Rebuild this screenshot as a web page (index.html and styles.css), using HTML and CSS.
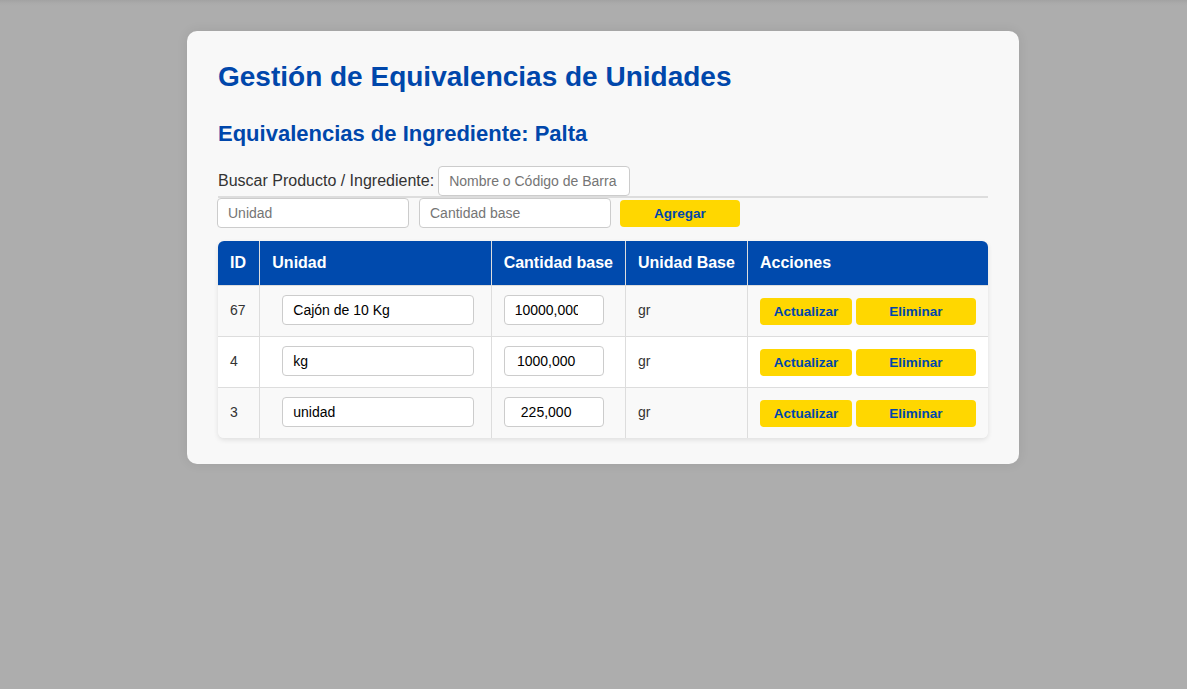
FILE: index.html
```html
<!DOCTYPE html>
<html lang="es">
<head>
<meta charset="utf-8">
<title>Gestión de Equivalencias de Unidades</title>
<link rel="stylesheet" href="styles.css">
</head>
<body>
<div class="overlay">
  <section class="modal">
    <h1 class="modal-title">Gestión de Equivalencias de Unidades</h1>
    <h2 class="modal-subtitle">Equivalencias de Ingrediente: Palta</h2>

    <div class="search-row">
      <label class="search-label" for="buscar">Buscar Producto / Ingrediente:</label>
      <input id="buscar" class="field" type="text" placeholder="Nombre o Código de Barra">
    </div>

    <div class="add-row">
      <input class="field" type="text" placeholder="Unidad">
      <input class="field" type="text" placeholder="Cantidad base">
      <button class="btn btn-add" type="button">Agregar</button>
    </div>

    <table class="eq-table">
      <thead>
        <tr>
          <th class="col-id">ID</th>
          <th class="col-unit">Unidad</th>
          <th class="col-qty">Cantidad base</th>
          <th class="col-base">Unidad Base</th>
          <th class="col-actions">Acciones</th>
        </tr>
      </thead>
      <tbody>
        <tr>
          <td>67</td>
          <td class="cell-unit"><input class="field cell-field" type="text" value="Cajón de 10 Kg"></td>
          <td class="cell-qty"><input class="field qty-field" type="text" value="10000,000"></td>
          <td>gr</td>
          <td class="cell-actions"><button class="btn btn-update" type="button">Actualizar</button><button class="btn btn-delete" type="button">Eliminar</button></td>
        </tr>
        <tr>
          <td>4</td>
          <td class="cell-unit"><input class="field cell-field" type="text" value="kg"></td>
          <td class="cell-qty"><input class="field qty-field" type="text" value="1000,000"></td>
          <td>gr</td>
          <td class="cell-actions"><button class="btn btn-update" type="button">Actualizar</button><button class="btn btn-delete" type="button">Eliminar</button></td>
        </tr>
        <tr>
          <td>3</td>
          <td class="cell-unit"><input class="field cell-field" type="text" value="unidad"></td>
          <td class="cell-qty"><input class="field qty-field" type="text" value="225,000"></td>
          <td>gr</td>
          <td class="cell-actions"><button class="btn btn-update" type="button">Actualizar</button><button class="btn btn-delete" type="button">Eliminar</button></td>
        </tr>
      </tbody>
    </table>
  </section>
</div>
</body>
</html>
```

FILE: styles.css
```css
* {
  box-sizing: border-box;
}

html,
body {
  margin: 0;
  height: 100%;
  overflow: hidden;
}

body {
  font-family: "Liberation Sans", Arial, sans-serif;
  color: #333;
  background: #adadad;
}

.overlay {
  height: 100%;
  padding: 31px 0 0 19px;
  background: linear-gradient(to bottom, #a2a2a2 0, #aaaaaa 3px, #adadad 6px);
}

.modal {
  width: 832px;
  margin: 0 auto;
  padding: 30px 31px 26px;
  background: #f8f8f8;
  border-radius: 10px;
  box-shadow: 0 0 12px rgba(0, 0, 0, 0.08);
}

.modal-title {
  margin: 0;
  font-size: 28px;
  line-height: 32px;
  font-weight: bold;
  color: #0047ab;
}

.modal-subtitle {
  margin: 28px 0 0;
  font-size: 22px;
  line-height: 26px;
  font-weight: bold;
  color: #0047ab;
}

.search-row {
  display: flex;
  align-items: center;
  gap: 4px;
  margin-top: 19px;
  border-bottom: 2px solid #dddddd;
}

.search-label {
  font-size: 16px;
  color: #333;
}

.field {
  width: 192px;
  height: 30px;
  padding: 0 10px;
  border: 1px solid #cccccc;
  border-radius: 4px;
  background: #ffffff;
  font-family: "Liberation Sans", Arial, sans-serif;
  font-size: 14px;
  color: #000;
}

.field::placeholder {
  color: #757575;
}

.add-row {
  display: flex;
  align-items: center;
  gap: 10px;
  margin-left: -1px;
}

.btn {
  height: 27px;
  padding: 0;
  border: none;
  border-radius: 4px;
  background: #ffd700;
  color: #0047ab;
  font-family: "Liberation Sans", Arial, sans-serif;
  font-size: 13.5px;
  font-weight: bold;
  cursor: pointer;
}

.btn-add {
  width: 120px;
  margin-left: -1px;
}

.eq-table {
  width: 770px;
  margin-top: 13px;
  border-collapse: collapse;
  border-radius: 6px;
  overflow: hidden;
  box-shadow: 0 2px 5px rgba(0, 0, 0, 0.1);
  font-size: 14px;
}

.eq-table th,
.eq-table td {
  border: 1px solid #dddddd;
  padding: 0 12px;
  text-align: left;
}

.eq-table tr > :first-child {
  border-left: none;
}

.eq-table tr > :last-child {
  border-right: none;
}

.eq-table th {
  height: 44px;
  background: #004aad;
  color: #ffffff;
  font-size: 16px;
  font-weight: bold;
  white-space: nowrap;
  border-top: none;
}

.eq-table tbody tr {
  height: 51px;
  background: #f9f9f9;
}

.eq-table tbody tr:nth-child(even) {
  background: #ffffff;
}

.eq-table tbody tr:last-child td {
  border-bottom: none;
}

.eq-table td {
  vertical-align: middle;
  color: #333;
  padding-bottom: 1px;
}

.col-id { width: 42px; }
.col-unit { width: 232px; }
.col-qty { width: 134px; }
.col-base { width: 122px; }
.col-actions { width: 240px; }

.eq-table .cell-unit {
  padding-left: 22px;
}

.cell-field {
  display: block;
}

.qty-field {
  display: block;
  width: 100px;
  padding: 0 25px 0 10px;
  text-align: center;
}

.cell-actions {
  white-space: nowrap;
}

.btn-update,
.btn-delete {
  position: relative;
  top: 1px;
}

.btn-update {
  width: 92px;
}

.btn-delete {
  width: 120px;
  margin-left: 4px;
}
```
